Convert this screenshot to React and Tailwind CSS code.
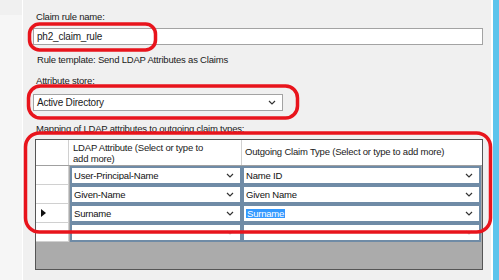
import React from "react";

const font = { fontFamily: '"Liberation Sans", Arial, sans-serif' };

function Chevron({ faint }) {
  return (
    <svg width="8" height="5" viewBox="0 0 8 5" className="shrink-0">
      <path d="M1 1 L4 4 L7 1" fill="none" stroke={faint ? "#bbbbbb" : "#333333"} strokeWidth="1.2" />
    </svg>
  );
}

function Combo({ text, selected, faint }) {
  return (
    <div className="flex h-full items-center border-2 border-[#6f8ba6] bg-white pl-[2px] pr-[6px]">
      <div className="flex-1 truncate text-[9.5px] leading-none text-[#111]">
        {selected ? <span className="bg-[#3399ff] px-[1px] py-[1px] text-white">{text}</span> : text}
      </div>
      <Chevron faint={faint} />
    </div>
  );
}

const rows = [
  { a: "User-Principal-Name", b: "Name ID" },
  { a: "Given-Name", b: "Given Name" },
  { a: "Surname", b: "Surname", current: true },
];

export default function App() {
  return (
    <div className="relative flex h-[280px] w-[499px] overflow-hidden bg-[#f0f0f0] text-[9.5px] tracking-[-0.2px] text-[#1a1a1a]" style={font}>
      {/* left panel edge */}
      <div className="flex w-[23px] flex-col border-r border-white">
        <div className="h-[15px] bg-[#f0f0f0]" />
        <div className="flex-1 bg-[#f6f6f6]" />
      </div>

      {/* main form */}
      <div className="flex flex-1 flex-col pl-[10px] pr-[8px] pt-[11px]">
        <div className="ml-[3px] leading-[12px]">Claim rule name:</div>
        <div className="mt-[5px] flex h-[17px] items-center border border-[#a3a3a3] bg-white pl-[3px] text-[10px]">
          ph2_claim_rule
        </div>
        <div className="ml-[4px] mt-[9px] leading-[12px]">Rule template: Send LDAP Attributes as Claims</div>
        <div className="ml-[3px] mt-[9px] leading-[12px]">Attribute store:</div>
        <div className="mt-[7px] flex h-[17px] w-[250px] items-center border border-[#a3a3a3] bg-white pl-[3px] pr-[6px] text-[10px]">
          <span className="flex-1">Active Directory</span>
          <Chevron />
        </div>
        <div className="ml-[3px] mt-[12px] leading-[12px]">Mapping of LDAP attributes to outgoing claim types:</div>

        {/* grid */}
        <div className="ml-[2px] mt-[4px] flex h-[131px] w-[448px] flex-col border border-[#555] bg-[#ababab]">
          <div className="flex h-[26px] border-b border-[#a0a0a0] bg-white">
            <div className="w-[33px] border-r border-[#d0d0d0]" />
            <div className="flex w-[173px] items-center border-r border-[#d0d0d0] pl-[4px] leading-[11px]">
              LDAP Attribute (Select or type to<br />add more)
            </div>
            <div className="flex flex-1 items-center pl-[3px]">
              Outgoing Claim Type (Select or type to add more)
            </div>
          </div>
          {[...rows, { a: "", b: "", empty: true }].map((r, i) => (
            <div key={i} className="flex h-[19px]">
              <div className="flex w-[33px] items-center border-b border-r border-[#d0d0d0] bg-white pl-[5px]">
                {r.current && (
                  <svg width="5" height="8" viewBox="0 0 5 8">
                    <path d="M0 0 L5 4 L0 8 Z" fill="#111" />
                  </svg>
                )}
              </div>
              <div className="w-[173px] pl-[1px]">
                <Combo text={r.a} faint={r.empty} />
              </div>
              <div className="flex-1 pr-[1px]">
                <Combo text={r.b} selected={r.current} faint={r.empty} />
              </div>
            </div>
          ))}
        </div>
      </div>

      {/* right window edge */}
      <div className="w-[2px] bg-white" />
      <div className="w-[6px] bg-[#5dc4ec]" />

      {/* red annotations */}
      <svg className="pointer-events-none absolute left-0 top-0" width="499" height="280">
        <rect x="29.5" y="24" width="126" height="26" rx="10" fill="none" stroke="#e8141c" strokeWidth="3.5" />
        <rect x="28.5" y="86" width="269" height="32" rx="12" fill="none" stroke="#e8141c" strokeWidth="3.5" />
        <rect x="25.5" y="133" width="465" height="99" rx="14" fill="none" stroke="#e8141c" strokeWidth="3.5" />
      </svg>
    </div>
  );
}
